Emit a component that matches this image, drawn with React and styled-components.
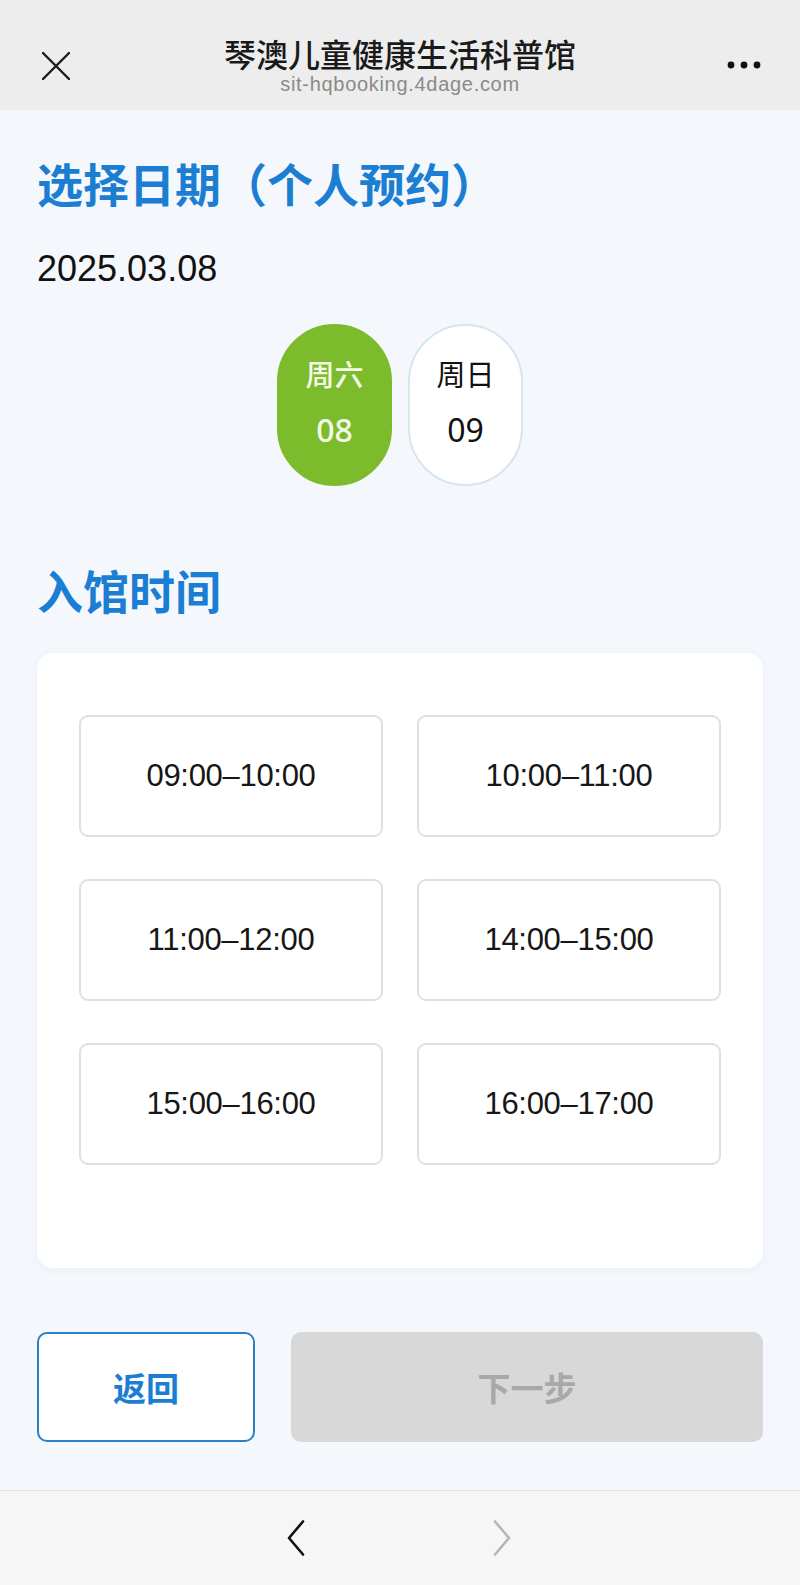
import React from 'react';
import styled, { createGlobalStyle } from 'styled-components';

const GlobalStyle = createGlobalStyle`
  * { box-sizing: border-box; }
  body {
    margin: 0;
    background: #f4f8fc;
    font-family: "Liberation Sans", "Noto Sans CJK SC", sans-serif;
  }
`;

const Page = styled.div`
  width: 800px;
  min-height: 1585px;
  background: #f4f8fc;
  display: flex;
  flex-direction: column;
`;

const Header = styled.header`
  height: 110px;
  background: #ededed;
  display: grid;
  grid-template-columns: 1fr auto 1fr;
  align-items: start;
`;

const HeaderLeft = styled.div`
  padding: 52px 0 0 42px;
  display: flex;
`;

const HeaderRight = styled.div`
  padding: 61px 39px 0 0;
  display: flex;
  justify-content: flex-end;
`;

const HeaderCenter = styled.div`
  padding-top: 35px;
  text-align: center;
`;

const SiteTitle = styled.div`
  font-family: "Noto Sans CJK SC", sans-serif;
  font-size: 32px;
  line-height: 36px;
  font-weight: 500;
  color: #1a1a1a;
`;

const SiteUrl = styled.div`
  font-family: "Liberation Sans", sans-serif;
  font-size: 20px;
  letter-spacing: 0.7px;
  line-height: 24px;
  margin-top: 1px;
  color: #8a8a8a;
`;

const Main = styled.main`
  padding: 0 37px;
  flex: 1;
`;

const SectionTitle = styled.h2`
  margin: ${p => p.$top}px 0 0;
  font-family: "Noto Sans CJK SC", sans-serif;
  font-size: 46px;
  line-height: 50px;
  font-weight: 700;
  color: #1b7ed2;
`;

const DateText = styled.div`
  margin-top: 42px;
  font-size: 36px;
  line-height: 40px;
  color: #111;
`;

const DayRow = styled.div`
  margin-top: 35px;
  display: flex;
  justify-content: center;
  gap: 16px;
`;

const DayPill = styled.div`
  width: 115px;
  height: 162px;
  border-radius: 58px;
  display: flex;
  flex-direction: column;
  align-items: center;
  padding-top: 30px;
  font-weight: ${p => (p.$active ? 500 : 400)};
  background: ${p => (p.$active ? '#7cbc2c' : '#ffffff')};
  border: 2px solid ${p => (p.$active ? '#7cbc2c' : '#d6e6f1')};
  color: ${p => (p.$active ? '#f4fbe9' : '#111')};
`;

const DayName = styled.span`
  font-family: "Noto Sans CJK SC", sans-serif;
  font-size: 29px;
  line-height: 34px;
`;

const DayNum = styled.span`
  margin-top: 22px;
  font-family: "Noto Sans", "Liberation Sans", sans-serif;
  font-size: 32px;
  line-height: 36px;
`;

const Card = styled.section`
  margin-top: 39px;
  background: #fff;
  border-radius: 16px;
  box-shadow: 0 2px 10px rgba(40, 70, 110, 0.05);
  padding: 62px 42px 103px;
  display: grid;
  grid-template-columns: 1fr 1fr;
  gap: 42px 34px;
`;

const Slot = styled.div`
  height: 122px;
  border: 2px solid #e0e0e0;
  border-radius: 9px;
  display: flex;
  align-items: center;
  justify-content: center;
  font-size: 31px;
  letter-spacing: -0.3px;
  color: #161616;
`;

const Actions = styled.div`
  margin: 64px 0 47px;
  display: flex;
  gap: 36px;
`;

const Button = styled.button`
  height: 110px;
  border-radius: 10px;
  font-family: "Noto Sans CJK SC", sans-serif;
  font-size: 33px;
  font-weight: 700;
  padding: 0;
  width: ${p => (p.$back ? '218px' : 'auto')};
  flex: ${p => (p.$back ? '0 0 218px' : '1')};
  background: ${p => (p.$back ? '#fff' : '#d8d8d8')};
  border: 2px solid ${p => (p.$back ? '#2a7fc6' : '#d8d8d8')};
  color: ${p => (p.$back ? '#1b7ed2' : '#a8a8a8')};
`;

const BottomBar = styled.nav`
  height: 95px;
  background: #f6f6f6;
  border-top: 1px solid #e2e2e2;
  display: flex;
  justify-content: center;
  align-items: center;
  gap: 186px;
  padding-right: 2px;
`;

const Chevron = ({ dir, color }) => (
  <svg width="20" height="36" viewBox="0 0 20 36" fill="none">
    <path
      d={dir === 'left' ? 'M17 1.5 L3 18 L17 34.5' : 'M3 1.5 L17 18 L3 34.5'}
      stroke={color}
      strokeWidth="2.6"
      strokeLinecap="round"
      strokeLinejoin="round"
    />
  </svg>
);

const slots = [
  '09:00–10:00',
  '10:00–11:00',
  '11:00–12:00',
  '14:00–15:00',
  '15:00–16:00',
  '16:00–17:00',
];

const days = [
  { name: '周六', num: '08', active: true },
  { name: '周日', num: '09', active: false },
];

export default function App() {
  return (
    <Page>
      <GlobalStyle />
      <Header>
        <HeaderLeft>
          <svg width="28" height="28" viewBox="0 0 28 28">
            <path d="M1 1 L27 27 M27 1 L1 27" stroke="#1a1a1a" strokeWidth="2.4" strokeLinecap="round" />
          </svg>
        </HeaderLeft>
        <HeaderCenter>
          <SiteTitle>琴澳儿童健康生活科普馆</SiteTitle>
          <SiteUrl>sit-hqbooking.4dage.com</SiteUrl>
        </HeaderCenter>
        <HeaderRight>
          <svg width="34" height="8" viewBox="0 0 34 8">
            <circle cx="4" cy="4" r="3.4" fill="#111" />
            <circle cx="17" cy="4" r="3.4" fill="#111" />
            <circle cx="30" cy="4" r="3.4" fill="#111" />
          </svg>
        </HeaderRight>
      </Header>

      <Main>
        <SectionTitle $top={47}>选择日期（个人预约）</SectionTitle>
        <DateText>2025.03.08</DateText>
        <DayRow>
          {days.map(d => (
            <DayPill key={d.num} $active={d.active}>
              <DayName>{d.name}</DayName>
              <DayNum>{d.num}</DayNum>
            </DayPill>
          ))}
        </DayRow>

        <SectionTitle $top={78}>入馆时间</SectionTitle>
        <Card>
          {slots.map(s => (
            <Slot key={s}>{s}</Slot>
          ))}
        </Card>

        <Actions>
          <Button $back>返回</Button>
          <Button disabled>下一步</Button>
        </Actions>
      </Main>

      <BottomBar>
        <Chevron dir="left" color="#111" />
        <Chevron dir="right" color="#b5b5b5" />
      </BottomBar>
    </Page>
  );
}
